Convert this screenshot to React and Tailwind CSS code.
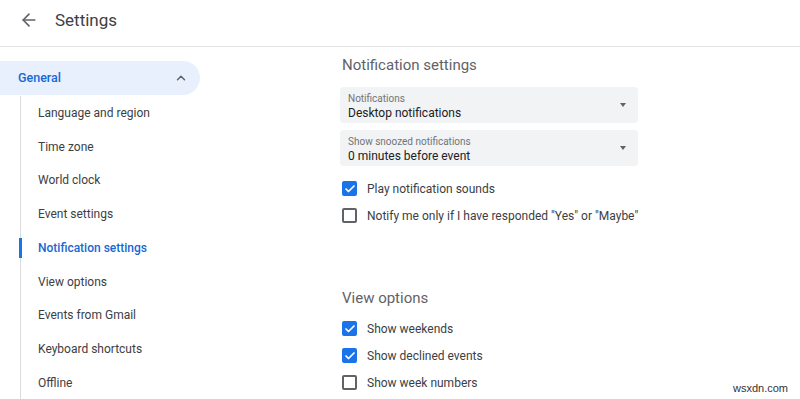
import { ArrowLeft, ChevronUp, Check } from "lucide-react";

const NAV = [
  "Language and region",
  "Time zone",
  "World clock",
  "Event settings",
  "Notification settings",
  "View options",
  "Events from Gmail",
  "Keyboard shortcuts",
  "Offline",
];

function Select({ label, value }) {
  return (
    <div className="w-[298px] h-[36px] bg-[#f1f3f4] rounded-[4px] pl-[8px] pr-[8px] pt-[4px] flex items-center justify-between">
      <div className="flex flex-col leading-none">
        <span className="text-[10px] text-[#70757a] leading-[12px]">{label}</span>
        <span className="text-[12px] text-[#202124] leading-[16px]">{value}</span>
      </div>
      <div className="w-0 h-0 border-l-[3px] border-r-[3px] border-t-[4px] border-l-transparent border-r-transparent border-t-[#5f6368] mr-[4px] -mt-[4px]" />
    </div>
  );
}

function CheckRow({ checked, label }) {
  return (
    <div className="h-[27px] flex items-center gap-[10px] pl-[2px]">
      {checked ? (
        <div className="w-[15px] h-[15px] rounded-[2px] bg-[#1a73e8] flex items-center justify-center">
          <Check size={12} strokeWidth={3.5} className="text-white" />
        </div>
      ) : (
        <div className="w-[15px] h-[15px] rounded-[2px] border-2 border-[#5f6368]" />
      )}
      <span className="text-[12px] text-[#3c4043]">{label}</span>
    </div>
  );
}

export default function App() {
  return (
    <div className="w-[800px] h-[399px] bg-white overflow-hidden relative font-['Roboto',sans-serif]">
      {/* Header */}
      <div className="h-[47px] border-b border-[#e3e3e3] flex items-start pt-[8px]">
        <div className="w-[58px] h-[24px] flex items-center pl-[19px]">
          <ArrowLeft size={20} strokeWidth={2} className="text-[#5f6368]" />
        </div>
        <span className="text-[17px] leading-[24px] text-[#3c4043] -ml-[3px]">Settings</span>
      </div>

      <div className="flex">
        {/* Sidebar */}
        <div className="w-[216px] pt-[14px]">
          <div className="w-[200px] h-[34px] bg-[#e8f0fe] rounded-r-full flex items-center justify-between pl-[18px] pr-[12px]">
            <span className="text-[12.5px] font-medium text-[#1967d2]">General</span>
            <ChevronUp size={14} strokeWidth={2.5} className="text-[#5f6368]" />
          </div>
          <div className="ml-[20px] mt-[1px] border-l border-[#dadce0]">
            {NAV.map((item) => {
              const active = item === "Notification settings";
              return (
                <div key={item} className="h-[33.75px] flex items-center relative">
                  {active && <div className="absolute -left-[2px] top-[7px] w-[3px] h-[20px] bg-[#1a73e8]" />}
                  <span
                    className={`pl-[17px] text-[12px] ${active ? "text-[#1967d2] font-medium" : "text-[#3c4043]"}`}
                  >
                    {item}
                  </span>
                </div>
              );
            })}
          </div>
        </div>

        {/* Main */}
        <div className="pl-[124px] pt-[6px]">
          <h2 className="text-[15px] leading-[24px] text-[#5f6368] pl-[2px]">Notification settings</h2>
          <div className="flex flex-col gap-[7px] mt-[10px]">
            <Select label="Notifications" value="Desktop notifications" />
            <Select label="Show snoozed notifications" value="0 minutes before event" />
          </div>
          <div className="mt-[9px]">
            <CheckRow checked label="Play notification sounds" />
            <CheckRow label={'Notify me only if I have responded "Yes" or "Maybe"'} />
          </div>
          <h2 className="text-[15px] leading-[24px] text-[#5f6368] pl-[2px] mt-[57px]">View options</h2>
          <div className="mt-[5px]">
            <CheckRow checked label="Show weekends" />
            <CheckRow checked label="Show declined events" />
            <CheckRow label="Show week numbers" />
          </div>
        </div>
      </div>

      <span className="absolute right-[12px] bottom-[3px] text-[11px] text-[#333] font-['Liberation_Sans',sans-serif]">
        wsxdn.com
      </span>
    </div>
  );
}
